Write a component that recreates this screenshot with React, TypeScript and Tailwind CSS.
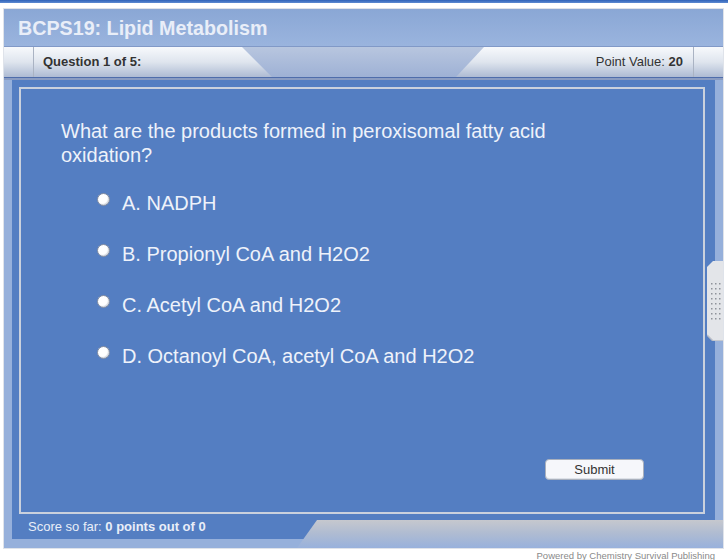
import { Fragment } from "react"

const options = [
  "A. NADPH",
  "B. Propionyl CoA and H2O2",
  "C. Acetyl CoA and H2O2",
  "D. Octanoyl CoA, acetyl CoA and H2O2",
]

function Handle() {
  const rows = [22, 27, 32, 37, 42, 47, 52, 57]
  return (
    <svg width="16" height="80" viewBox="0 0 16 80" className="absolute right-0 top-[252px]">
      <path d="M6 0 H16 V80 H6 L0 74 V6 Z" fill="#e3e5e9" />
      <path d="M0 74 L6 80 H16" fill="none" stroke="#b9bdc6" strokeWidth="1.5" />
      {rows.map((y) => (
        <Fragment key={y}>
          <rect x="4" y={y} width="1.5" height="1.5" fill="#8f939b" />
          <rect x="8" y={y} width="1.5" height="1.5" fill="#8f939b" />
          <rect x="12" y={y} width="1.5" height="1.5" fill="#8f939b" />
        </Fragment>
      ))}
    </svg>
  )
}

export default function App() {
  return (
    <div className="w-[728px] h-[560px] bg-white overflow-hidden font-['Liberation_Sans',Arial,sans-serif]">
      {/* top strip */}
      <div className="h-[3px] bg-linear-to-b from-[#2f62b8] to-[#5d8ad2]" />

      {/* player frame */}
      <div className="relative mt-[5px] ml-[3px] w-[721px] h-[541px] border border-[#dfe3ea] bg-[#96b0db] flex flex-col">
        {/* title */}
        <div className="h-[38px] shrink-0 flex items-center pl-[14px] pt-[2px] border-b border-[#8199c7] bg-linear-to-b from-[#8aa7d5] to-[#9ab4de]">
          <span className="text-[19.7px] font-bold text-[#e9eef8]">BCPS19: Lipid Metabolism</span>
        </div>

        {/* tab bar */}
        <div className="h-[30px] shrink-0 flex bg-linear-to-b from-[#b8c6df] to-[#9eb1d5]">
          <div className="w-[268px] flex bg-linear-to-b from-[#f7f9fc] via-[#dfe5ee] to-[#aebbd3] [clip-path:polygon(0_0,238px_0,100%_100%,0_100%)]">
            <div className="w-[30px] border-r border-[#aab3c3]" />
            <div className="pl-[9px] flex items-center text-[13px] font-bold text-[#333]">Question 1 of 5:</div>
          </div>
          <div className="flex-1" />
          <div className="w-[267px] flex bg-linear-to-b from-[#f7f9fc] via-[#dfe5ee] to-[#aebbd3] [clip-path:polygon(28px_0,100%_0,100%_100%,0_100%)]">
            <div className="flex-1 flex items-center justify-end pr-[10px] text-[13px] text-[#333]">
              Point Value:&nbsp;<b>20</b>
            </div>
            <div className="w-[30px] border-l border-[#aab3c3]" />
          </div>
        </div>
        <div className="h-px shrink-0 bg-[#4f6dab]" />
        <div className="h-[2px] shrink-0 bg-[#8a9cc2]" />

        {/* body */}
        <div className="h-[459px] shrink-0 flex px-[8px]">
          <div className="flex-1 bg-[#547ec2] flex flex-col pl-[7px] pr-[10px] pt-[7px]">
            <div className="h-[427px] border-2 border-[#cad1dd] flex flex-col">
              <p className="pl-[40px] pt-[30px] w-[580px] text-[20px] leading-[24px] text-[#eef2fa] mb-[10px]">
                What are the products formed in peroxisomal fatty acid oxidation?
              </p>
              {options.map((o) => (
                <div key={o} className="h-[51px] flex items-center pl-[76px]">
                  <span className="w-[13px] h-[13px] rounded-full bg-white border border-[#7f8aa0] -mt-[6px] shadow-[inset_-1px_-1px_1px_#d4d8de]" />
                  <span className="ml-[12px] text-[20px] text-[#eef2fa]">{o}</span>
                </div>
              ))}
              <div className="flex-1" />
              <div className="flex justify-end pr-[59px] pb-[32px]">
                <button className="w-[99px] h-[21px] rounded-[4px] bg-[#f6f7fb] border border-[#a9b0bd] shadow-[inset_0_-1px_0_#dde1e8] text-[13px] text-[#333]">
                  Submit
                </button>
              </div>
            </div>
            <div className="h-[25px] flex items-center pl-[9px] text-[13px] text-[#e9eef8]">
              Score so far:&nbsp;<b>0 points out of 0</b>
            </div>
          </div>
        </div>

        <div className="absolute right-0 bottom-0 left-[293px] h-[28px] bg-linear-to-b from-[#c6c8ce] via-[#aebbd2] to-[#98b1dc] [clip-path:polygon(20px_0,100%_0,100%_100%,0_100%)]" />
        <Handle />
      </div>

      <div className="text-right pr-[13px] pt-px text-[9.5px] leading-[11px] text-[#8a8a8a]">
        Powered by Chemistry Survival Publishing
      </div>
    </div>
  )
}
